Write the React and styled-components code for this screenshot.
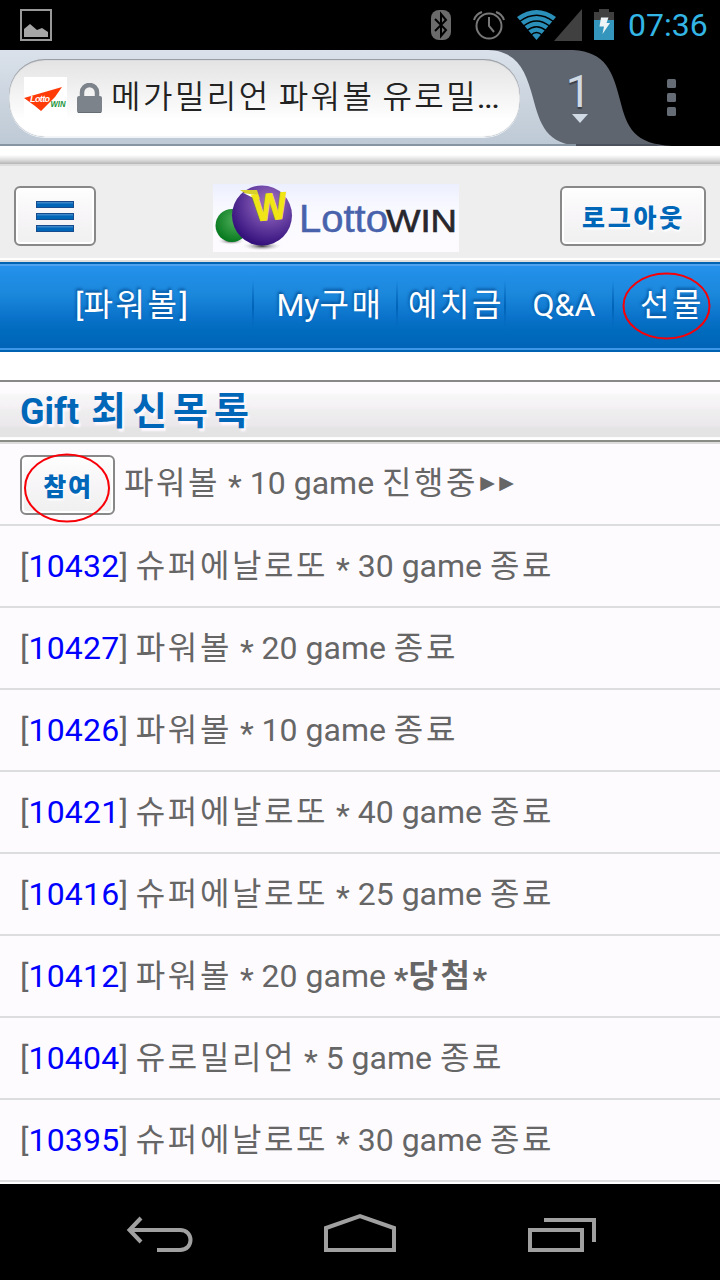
import React from "react";
import styled, { createGlobalStyle } from "styled-components";

const GlobalStyle = createGlobalStyle`
  * { box-sizing: border-box; }
  body { margin: 0; background: #fff; }
`;

const Screen = styled.div`
  width: 720px;
  height: 1280px;
  display: flex;
  flex-direction: column;
  overflow: hidden;
  background: #fff;
  color: #666;
  font-family: Roboto, "Noto Sans CJK KR", sans-serif;
`;

/* ---------- mixed latin / hangul text ---------- */
const Hangul = styled.span`
  font-family: "Noto Sans CJK KR", sans-serif;
  font-size: ${(p) => (p.$size ? `${p.$size}px` : "inherit")};
  font-weight: ${(p) => p.$weight || "inherit"};
  letter-spacing: ${(p) => p.$gap}px;
  line-height: 1;
`;

const Star = styled.span`
  position: relative;
  top: 3px;
`;

function Mixed({ text, gap = 2.6, weight, size }) {
  return text
    .split(/([\uac00-\ud7a3]+|\*)/)
    .filter(Boolean)
    .map((part, i) => {
      if (part === "*") return <Star key={i}>*</Star>;
      if (/[\uac00-\ud7a3]/.test(part))
        return (
          <Hangul key={i} $gap={gap} $weight={weight} $size={size}>
            {part}
          </Hangul>
        );
      return <React.Fragment key={i}>{part}</React.Fragment>;
    });
}

/* ---------- status bar ---------- */
const StatusBar = styled.header`
  flex: none;
  height: 50px;
  display: flex;
  align-items: center;
  justify-content: space-between;
  padding: 0 12px 0 20px;
  background: #000;
`;

const StatusIcons = styled.div`
  display: flex;
  align-items: center;
`;

const Clock = styled.span`
  margin-left: 13px;
  width: 80px;
  font-size: 32px;
  line-height: 52px;
  color: #33b5e5;
  white-space: nowrap;
`;

/* ---------- browser bar ---------- */
const BrowserBar = styled.div`
  flex: none;
  position: relative;
  height: 96px;
  display: flex;
  align-items: flex-start;
  background: #000;
`;

const BarShape = styled.svg`
  position: absolute;
  inset: 0;
`;

const AddressField = styled.div`
  position: relative;
  width: 511px;
  height: 78px;
  margin: 9px 0 0 9px;
  padding: 0 12px 0 15px;
  display: flex;
  align-items: center;
  border-radius: 36px;
  background: linear-gradient(#e3e3e3, #fff 78%);
  box-shadow: inset 0 1px 1px #92979f, inset 0 0 1px #92979f, 0 1px 0 #eef3f8;
`;

const LockSlot = styled.span`
  display: flex;
  margin-left: 10px;
`;

const PageTitle = styled.span`
  margin-left: 9px;
  font-size: 32px;
  line-height: 78px;
  color: #222;
  white-space: nowrap;
`;

const Ellipsis = styled.span`
  font-size: 28px;
  font-weight: 500;
  margin-left: -1px;
  letter-spacing: -0.5px;
`;

const TabCount = styled.div`
  position: relative;
  margin-left: 42px;
  width: 36px;
  display: flex;
  flex-direction: column;
  align-items: center;
  font-size: 45px;
  font-weight: 400;
  line-height: 50px;
  padding-top: 17px;
  color: #d0dae5;
  text-shadow: 0 2px 1px #3a3f48;
`;

const TabDigit = styled.span`
  margin-left: -3px;
`;

const TabArrow = styled.i`
  margin-top: -3px;
  border: 8px solid transparent;
  border-top: 9px solid #d0dae5;
  border-bottom: 0;
`;

const Overflow = styled.div`
  position: relative;
  margin: 29px 0 0 69px;
  display: flex;
  flex-direction: column;
  gap: 5px;
`;

const Dot = styled.i`
  width: 9px;
  height: 9px;
  border-radius: 1.5px;
  background: #666c76;
`;

/* ---------- site header ---------- */
const PageGap = styled.div`
  flex: none;
  height: 18px;
  background: linear-gradient(#fff 9px, #dcdcdc 14px, #b5b5b5 18px);
`;

const SiteHeader = styled.div`
  flex: none;
  height: 98px;
  display: grid;
  grid-template-columns: 199px 246px 1fr;
  align-items: start;
  padding: 20px 14px 0;
  border-top: 2px solid #ddd;
  border-bottom: 2px solid #ddd;
  background: #eee;
  box-shadow: inset 0 -2px #fff;
`;

const Button = styled.button`
  position: relative;
  width: ${(p) => p.$width}px;
  height: 60px;
  margin-top: ${(p) => p.$drop || 0}px;
  justify-self: ${(p) => p.$align || "start"};
  padding: 0 0 0 1px;
  flex: none;
  display: inline-flex;
  align-items: center;
  justify-content: center;
  border: 2px solid #888;
  border-radius: 6px;
  background: linear-gradient(#fefefe, #f7f5f7 50%, #f0f0f0);
  box-shadow: inset 0 0 0 2px #fff;
  color: #0067b8;
  font: bold 25px/56px Roboto, "Noto Sans CJK KR", sans-serif;
  text-shadow: 1px 2px 2px #fff;
`;

const MenuLines = styled.span`
  display: grid;
  gap: 5px;
  margin-left: -1px;
  i {
    width: 38px;
    height: 7px;
    border: 1px solid #164c8e;
    background: linear-gradient(#3c86c8 1px, #0067b8 2px);
  }
`;

/* ---------- blue navigation ---------- */
const Nav = styled.nav`
  flex: none;
  height: 90px;
  display: grid;
  grid-template-columns: 254px 144px 108px 108px 106px;
  border-top: 2px solid #0063b1;
  border-bottom: 2px solid #0063b1;
  background: linear-gradient(#2591ec, #1b88dc 35%, #0a72ca 62%, #006bbd 78%, #0063b8);
  box-shadow: inset 0 2px #4da1ee, inset 0 -2px #3e98ea;
`;

const NavItem = styled.a`
  position: relative;
  display: flex;
  align-items: center;
  justify-content: center;
  padding: 0 0 4px ${(p) => p.$indent}px;
  font-size: 32px;
  line-height: 80px;
  color: #fff;
  white-space: nowrap;
  text-shadow: -1px -2px 3px #07529a;
  background: linear-gradient(#0063b800 10%, #0063b8 50%, #0063b800 80%) right / 2px 80% no-repeat;
  &:last-child { background: none; }
`;

const Ring = styled.svg`
  position: absolute;
  left: ${(p) => p.$left}px;
  top: ${(p) => p.$top}px;
  overflow: visible;
  pointer-events: none;
`;

/* ---------- list ---------- */
const Heading = styled.h2`
  flex: none;
  height: 62px;
  margin: 28px 0 0;
  padding-left: 20px;
  border-top: 2px solid #888;
  border-bottom: 2px solid #888c85;
  background: linear-gradient(#fefbfe 18%, #f7f7f7 22%, #f5f1f5 42%, #eee 50%, #ece8ec 74%, #e4e4e4 80%, #e4e4e4 94%, #fff 96%);
  font-size: 36px;
  line-height: 60px;
  color: #0067b8;
  text-shadow: 2px 3px 2px #fff9ff;
  white-space: nowrap;
  word-spacing: 3px;
`;

const List = styled.ul`
  flex: none;
  margin: 0 0 2px;
  padding: 0;
  list-style: none;
  border-top: 2px solid #ddd;
  background: #fefbff;
`;

const Row = styled.li`
  height: 82px;
  padding: 0 20px;
  display: flex;
  align-items: center;
  border-bottom: 2px solid #dddde0;
  font-size: 32px;
  line-height: 80px;
  white-space: pre;
`;

const RowText = styled.span`
  margin-left: ${(p) => p.$left || 0}px;
  padding-top: ${(p) => p.$drop || 0}px;
`;

const RowId = styled.a`
  color: #00f;
  letter-spacing: 0.2px;
`;

const Arrows = styled.span`
  font-family: "DejaVu Sans", sans-serif;
  font-size: 19px;
  letter-spacing: 4.4px;
  position: relative;
  top: -5px;
  left: 2px;
`;

/* ---------- system navigation ---------- */
const SystemBar = styled.footer`
  flex: 1;
  display: flex;
  align-items: flex-start;
  justify-content: space-between;
  padding: 28px 122px 0 124px;
  background: #000;
`;

const rows = [
  ["10432", "슈퍼에날로또 * 30 game 종료"],
  ["10427", "파워볼 * 20 game 종료"],
  ["10426", "파워볼 * 10 game 종료"],
  ["10421", "슈퍼에날로또 * 40 game 종료"],
  ["10416", "슈퍼에날로또 * 25 game 종료"],
  ["10412", "파워볼 * 20 game ", "*당첨*"],
  ["10404", "유로밀리언 * 5 game 종료"],
  ["10395", "슈퍼에날로또 * 30 game 종료"],
];

function PictureIcon() {
  return (
    <svg width="32" height="32" viewBox="0 0 32 32">
      <rect x="1" y="1" width="30" height="30" fill="none" stroke="#999" strokeWidth="2" />
      <path d="M4 28V20L10 15L17 21L22 19L28 23V28Z" fill="#a6a6a6" />
    </svg>
  );
}

function StatusGlyphs() {
  return (
    <svg width="184" height="32" viewBox="431 9 184 32">
      <rect x="431" y="10" width="20" height="30" rx="8" fill="#6b6b6b" />
      <path d="M435 19L446 30L441 36V14L446 20L435 31" fill="none" stroke="#000" strokeWidth="2" />
      <g fill="none" stroke="#777" strokeWidth="2">
        <circle cx="489" cy="26" r="12.5" />
        <path d="M489 17V26L494 32M474 20Q476 14 482 12M504 20Q502 14 496 12" />
      </g>
      <path d="M536.500 40L517 17Q536.500 3 556 17Z" fill="#2a8fb9" />
      <g fill="none" stroke="#000" strokeWidth="1.500">
        <path d="M519.500 21.500Q536.500 9 553.500 21.500" />
        <path d="M523.500 26Q536.500 16 549.500 26" />
        <path d="M527 30.500Q536.500 23 546 30.500" />
        <path d="M531 35Q536.500 30 542 35" />
      </g>
      <path d="M554 41L582 9V41Z" fill="#404040" />
      <path d="M594 12H599V9H609V12H614V20H594Z" fill="#404040" />
      <rect x="594" y="20" width="20" height="20" fill="#3596bd" />
      <path d="M601 17.500H608.500L606.500 23H610L602.500 34L604 26.500H599.500Z" fill="#eef4f6" />
    </svg>
  );
}

function Favicon() {
  return (
    <svg width="43" height="43" viewBox="0 0 43 43">
      <rect width="43" height="43" fill="#fff" />
      <path d="M0 21L38 10L31 20L17 34L11 29Z" fill="#ff3b08" />
      <g fontFamily="Liberation Sans, sans-serif" fontWeight="bold" fontStyle="italic">
        <text x="6" y="25" fontSize="9" fill="#fff" textLength="20">Lotto</text>
        <text x="26.500" y="30" fontSize="9" fill="#21953d" textLength="15" lengthAdjust="spacingAndGlyphs">WIN</text>
      </g>
    </svg>
  );
}

function LockIcon() {
  return (
    <svg width="25" height="31" viewBox="0 0 25 31">
      <path d="M5 15V9.500A7.500 7.500 0 0 1 20 9.500V15" fill="none" stroke="#7d838a" strokeWidth="4.500" />
      <rect y="13" width="25" height="17" rx="2" fill="#7d838a" />
      <path d="M1 29.500H24" stroke="#666c73" />
    </svg>
  );
}

const LogoArt = styled.svg`
  margin-top: -2px;
  overflow: visible;
`;

function Logo() {
  return (
    <LogoArt width="246" height="68" viewBox="0 0 246 68">
      <defs>
        <radialGradient id="purple" cx=".62" cy=".3" r=".7">
          <stop offset="0" stopColor="#a876bd" />
          <stop offset=".45" stopColor="#7048a8" />
          <stop offset="1" stopColor="#35117c" />
        </radialGradient>
        <radialGradient id="green" cx=".6" cy=".35" r=".65">
          <stop offset="0" stopColor="#50ae5b" />
          <stop offset="1" stopColor="#087a20" />
        </radialGradient>
        <radialGradient id="shade">
          <stop offset="0" stopColor="#333" />
          <stop offset="1" stopColor="#fff" stopOpacity="0" />
        </radialGradient>
        <linearGradient id="sky" x2="0" y2="1">
          <stop offset="0" stopColor="#eceffe" />
          <stop offset=".35" stopColor="#f8f9ff" />
          <stop offset="1" stopColor="#fefbff" />
        </linearGradient>
      </defs>
      <rect width="246" height="68" fill="url(#sky)" />
      <ellipse cx="18" cy="57" rx="14" ry="4" fill="url(#shade)" />
      <ellipse cx="49" cy="62" rx="21" ry="5" fill="url(#shade)" />
      <circle cx="19" cy="41.500" r="16.500" fill="url(#green)" />
      <circle cx="49" cy="31.500" r="30" fill="url(#purple)" />
      <path d="M27 6H44L47 15L38 13Z" fill="#d8cf2c" />
      <path d="M30 9L43 11L45 14L39 13Z" fill="#fff" />
      <g fontFamily="Liberation Sans, sans-serif">
        <text x="40" y="36" fontSize="38" fontWeight="bold" fill="#f1e516" stroke="#f1e516" textLength="34" lengthAdjust="spacingAndGlyphs" transform="rotate(-5 56 22)">W</text>
        <text x="86" y="48" fontSize="38" fill="#4862ac" stroke="#4862ac" strokeWidth=".5" textLength="89" lengthAdjust="spacingAndGlyphs">Lotto</text>
        <text x="173" y="48" fontSize="32" fill="#28272d" stroke="#28272d" strokeWidth=".6" textLength="71" lengthAdjust="spacingAndGlyphs">WIN</text>
      </g>
    </LogoArt>
  );
}

export default function App() {
  return (
    <Screen>
      <GlobalStyle />
      <StatusBar>
        <PictureIcon />
        <StatusIcons>
          <StatusGlyphs />
          <Clock>07:36</Clock>
        </StatusIcons>
      </StatusBar>

      <BrowserBar>
        <BarShape width="720" height="96">
          <defs>
            <linearGradient id="bar" x2="0" y2="1">
              <stop offset="0" stopColor="#dae1ea" />
              <stop offset="1" stopColor="#bdc9d5" />
            </linearGradient>
          </defs>
          <path d="M480 0H573C606 2 613 22 620 50S634 94 672 96H480Z" fill="#5f656f" />
          <path d="M0 0H488C518 1 526 22 533 48S546 95 582 96H0Z" fill="url(#bar)" />
          <path d="M0 95H576" stroke="#8795a3" strokeWidth="2" />
          <path d="M576 95H658" stroke="#4c525d" strokeWidth="2" />
        </BarShape>
        <AddressField>
          <Favicon />
          <LockSlot>
            <LockIcon />
          </LockSlot>
          <PageTitle>
            <Mixed text="메가밀리언 파워볼 유로밀" gap={2.5} weight={350} />
            <Ellipsis>...</Ellipsis>
          </PageTitle>
        </AddressField>
        <TabCount>
          <TabDigit>1</TabDigit>
          <TabArrow />
        </TabCount>
        <Overflow>
          <Dot />
          <Dot />
          <Dot />
        </Overflow>
      </BrowserBar>

      <PageGap />
      <SiteHeader>
        <Button $width={82} aria-label="menu">
          <MenuLines>
            <i />
            <i />
            <i />
          </MenuLines>
        </Button>
        <Logo />
        <Button $width={146} $align="end">
          <Mixed text="로그아웃" gap={2.8} weight={900} />
        </Button>
      </SiteHeader>

      <Nav>
        <NavItem $indent={9}><span>[<Mixed text="파워볼" />]</span></NavItem>
        <NavItem $indent={8}><span><Mixed text="My구매" /></span></NavItem>
        <NavItem $indent={8}><span><Mixed text="예치금" /></span></NavItem>
        <NavItem $indent={8}>Q&amp;A</NavItem>
        <NavItem $indent={10}>
          <span><Mixed text="선물" /></span>
          <Ring $left={9} $top={9} width="87" height="66">
            <ellipse cx="43.500" cy="33" rx="43" ry="32.500" fill="none" stroke="#f80008" strokeWidth="2" />
          </Ring>
        </NavItem>
      </Nav>

      <Heading>
        Gift <Mixed text="최신목록" gap={6} size={38} />
      </Heading>
      <List>
        <Row>
          <Button $width={95} $drop={2}>
            <Mixed text="참여" gap={1.8} weight={900} />
            <Ring $left={3} $top={-3} width="84" height="68">
              <ellipse cx="42" cy="34" rx="42" ry="33.500" fill="none" stroke="#f80008" strokeWidth="2" />
            </Ring>
          </Button>
          <RowText $left={9} $drop={2}>
            <Mixed text="파워볼 * 10 game 진행중" />
            <Arrows>▶▶</Arrows>
          </RowText>
        </Row>
        {rows.map(([id, text, won]) => (
          <Row key={id}>
            <RowText>
              [<RowId>{id}</RowId>] <Mixed text={text} />
              {won && <b><Mixed text={won} /></b>}
            </RowText>
          </Row>
        ))}
      </List>

      <SystemBar>
        <svg width="72" height="48" viewBox="124 1212 72 48" fill="none" stroke="#a0a0a0" strokeWidth="4">
          <path d="M141 1218L129.500 1230L141 1242M130 1230H180C194 1230 194 1250 180 1250H157" />
        </svg>
        <svg width="76" height="48" viewBox="323 1212 76 48" fill="none" stroke="#a0a0a0" strokeWidth="4">
          <path d="M326 1250V1228L360 1216L394 1228V1250Z" />
        </svg>
        <svg width="72" height="48" viewBox="526 1212 72 48" fill="none" stroke="#a0a0a0" strokeWidth="4">
          <path d="M530 1230H582V1250H530ZM544 1220H594V1242" />
        </svg>
      </SystemBar>
    </Screen>
  );
}
